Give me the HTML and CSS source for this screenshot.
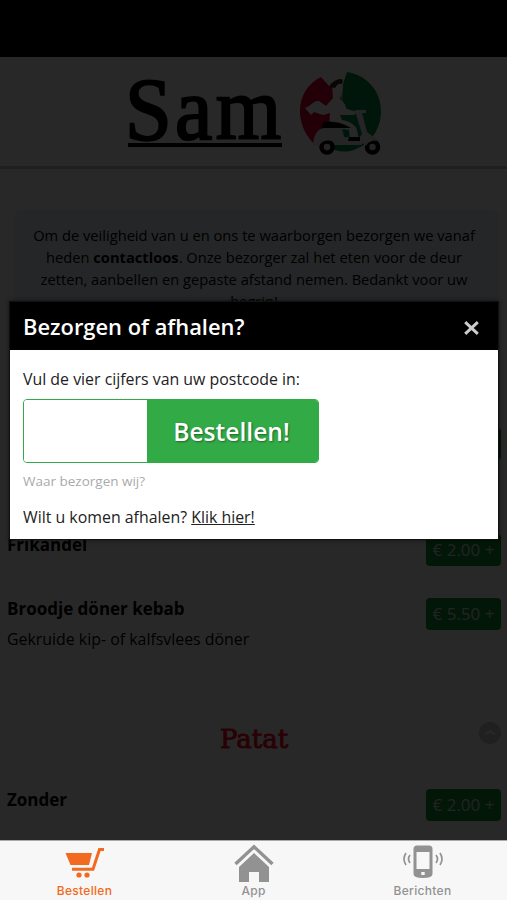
FILE: index.html
```html
<!DOCTYPE html>
<html lang="nl">
<head>
<meta charset="utf-8">
<title>Sam</title>
<link rel="stylesheet" href="styles.css">
</head>
<body>
<div class="app">
  <div class="screen">
    <div class="statusbar"></div>
    <header class="header">
      <span class="brand"><span class="brand-text">Sam</span></span>
      <svg class="logo" width="84" height="86" viewBox="0 0 84 86">
        <path fill="#e0002d" d="M22 5 C5 13 -2 32 2 48 C4 59 10 67 17 74 L44 62 L42 14 L31 15 Z"/>
        <path fill="#008f48" d="M48 0 C68 3 82 19 82 39 C82 57 72 71 57 77 C49 81 37 80 31 76 L42 48 L44 12 Z"/>
        <path fill="#fff" d="M33 12 L43 9 L43 20 L41 27 C47 31 46 35 48 37 L58 40 L55 43 L41 43 L43 48 C50 49 57 53 58 58 L60 68 L51 68 L50 58 L30 55 L31 41 L24 43 L15 40 L12 43 L6 36 C12 34 15 28 20 29 L27 34 L34 26 Z"/>
        <path fill="#3b2416" d="M30 15 C32 10 41 5 44 8 L43 12 C40 11 38 12 36 16 Z"/>
        <path fill="#e8e8e8" d="M56 38 H67 V41 H63 L68 60 L80 69 L79 74 L67 69 L62 73 H34 L14 74 C14 64 18 57 25 56 H43 L45 65 L60 66 L63 62 L57 42 Z"/>
        <path fill="#000" d="M24 50 Q38 48 52 56 H23 Z M50 65 H61 V69 H49 Z"/>
        <circle cx="28" cy="75" r="5.500" fill="#ddd" stroke="#000" stroke-width="4.500"/>
        <circle cx="73.500" cy="75" r="5.500" fill="#ddd" stroke="#000" stroke-width="4.500"/>
        <path fill="#e8e8e8" d="M17 65 H38 V73 C33 67 24 67 20 74 H15 Z M66 62 L80 70 C74 67 69 70 67 74 L63 70 Z"/>
      </svg>
    </header>
    <main class="menu">
      <p class="notice">Om de veiligheid van u en ons te waarborgen bezorgen we vanaf heden <b>contactloos</b>. Onze bezorger zal het eten voor de deur zetten, aanbellen en gepaste afstand nemen. Bedankt voor uw begrip!</p>
      <div class="item first"><h3></h3><span class="price">€ 2.00 +</span></div>
      <div class="item second"><h3>Frikandel</h3><span class="price">€ 2.00 +</span></div>
      <div class="item third"><div><h3>Broodje döner kebab</h3><p class="desc">Gekruide kip- of kalfsvlees döner</p></div><span class="price">€ 5.50 +</span></div>
      <div class="category">
        <h2>Patat</h2>
        <svg class="up" width="22" height="22" viewBox="0 0 22 22"><circle cx="11" cy="11" r="11" fill="#c8c8c8"/><path d="M6.5 12.5 L11 9 L15.5 12.5" fill="none" stroke="#fff" stroke-width="2"/></svg>
      </div>
      <div class="item"><h3>Zonder</h3><span class="price">€ 2.00 +</span></div>
    </main>
    <div class="overlay"></div>
    <section class="dialog">
      <div class="dialog-head">
        <h1>Bezorgen of afhalen?</h1>
        <svg width="15" height="14" viewBox="0 0 15 14"><path d="M1.2 1.2 L13.8 12.8 M13.8 1.2 L1.2 12.8" stroke="#ccc" stroke-width="3"/></svg>
      </div>
      <div class="dialog-body">
        <p class="prompt">Vul de vier cijfers van uw postcode in:</p>
        <form class="order"><input class="postcode" type="text"><button class="submit" type="button">Bestellen!</button></form>
        <p class="where">Waar bezorgen wij?</p>
        <p class="pickup">Wilt u komen afhalen? <a>Klik hier!</a></p>
      </div>
    </section>
  </div>
  <nav class="tabs">
    <div class="tab active">
      <svg width="40" height="35" viewBox="0 0 40 35"><g fill="#f26a21"><path d="M.5 8 H27 L24 20 H5.500 Z"/><circle cx="14" cy="30" r="2.600"/><circle cx="22" cy="30" r="2.600"/></g><path d="M7 24.300 H28 L34.500 4.500 H39" fill="none" stroke="#f26a21" stroke-width="3"/></svg>
      <span>Bestellen</span>
    </div>
    <div class="tab">
      <svg width="40" height="39" viewBox="0 0 40 39"><path d="M1.500 20 L20 2.800 L38.500 20" fill="none" stroke="#929292" stroke-width="3.400"/><path fill="#929292" d="M20 9 L35 23 V38 H25 V28 H15 V38 H5 V23 Z"/></svg>
      <span>App</span>
    </div>
    <div class="tab">
      <svg width="40" height="36" viewBox="0 0 40 36"><path fill="#929292" fill-rule="evenodd" d="M14 1.500 H26 Q29.500 1.500 29.500 5 V30 Q29.500 34 20 34 Q10.500 34 10.500 30 V5 Q10.500 1.500 14 1.500 Z M13.500 8 V25 H26.500 V8 Z M18.300 28 V31 H21.700 V28 Z"/><g fill="none" stroke="#929292" stroke-width="1.700"><path d="M7 11 Q4 15 7 19 M3 9 Q-1 15 3 21 M33 11 Q36 15 33 19 M37 9 Q41 15 37 21"/></g></svg>
      <span>Berichten</span>
    </div>
  </nav>
</div>
</body>
</html>
```
FILE: styles.css
```css
* { box-sizing: border-box; margin: 0; padding: 0; }
body { font-family: "Open Sans", sans-serif; background: #fff; overflow: hidden; }
.app { width: 507px; height: 900px; display: flex; flex-direction: column; }
.screen { position: relative; height: 840px; overflow: hidden; background: #fff; }
.statusbar { height: 57px; background: #000; }
.header { height: 112px; border-bottom: 3px solid #c4c4c4; display: flex; align-items: flex-start; justify-content: center; gap: 17px; padding-top: 14px; }
.brand { font: 88px/77px "Liberation Serif", serif; color: #000; border-bottom: 4px solid #000; width: 154px; height: 76px; -webkit-text-stroke: 2.200px #000; margin-left: 3px; }
.brand-text { display: inline-block; letter-spacing: 3.500px; transform: translateX(-3px) scaleX(.955); transform-origin: left; }
.logo { display: block; margin-top: 1px; }
.menu { padding: 40px 6px 0 7px; color: #000; }
.notice { margin: 0 2px 0 7px; height: 150px; padding: 14.500px 19px 0 14px; background: #e9f2f7; border-radius: 8px; text-align: center; font-size: 14.680px; line-height: 22px; }
.item { display: flex; justify-content: space-between; align-items: flex-start; }
.item h3 { font-size: 17px; line-height: 21px; }
.first { margin-top: 69px; height: 106px; }
.second { height: 64px; }
.third { height: 112px; }
.desc { font-size: 15.900px; line-height: 22px; margin-top: 9px; }
.price { width: 75px; height: 32px; background: #0f9130; color: #ddd; border-radius: 4px; text-align: center; font-size: 17px; line-height: 32px; white-space: nowrap; }
.category { display: grid; grid-template-columns: 1fr 1fr 1fr; height: 79px; }
.category h2 { grid-column: 2; text-align: center; color: #ff0a1e; font: 26px/58px "DejaVu Serif", serif; -webkit-text-stroke: .9px #ff0a1e; }
.category .up { justify-self: end; margin-top: 12px; }
.overlay { position: absolute; inset: 0; background: rgba(0, 0, 0, .843); }
.dialog { position: absolute; left: 9px; top: 301px; width: 490px; height: 239px; background: #fff; border: 1px solid #111; box-shadow: 0 0 4px rgba(0, 0, 0, .6); }
.dialog-head { height: 48px; background: #000; color: #fff; display: flex; align-items: center; justify-content: space-between; padding: 1px 19px 0 13px; }
.dialog-head h1 { font-size: 21.900px; font-weight: 600; line-height: 30px; }
.dialog-head svg { margin-top: 3px; }
.dialog-body { padding: 18px 13px; color: #222; font-size: 15.900px; line-height: 22px; }
.order { display: flex; width: 296px; height: 64px; margin-top: 9px; border: 1px solid #32ab46; border-radius: 4px; overflow: hidden; }
.postcode { width: 123px; border: 0; background: #fff; }
.submit { flex: 1; border: 0; padding-right: 2px; background: #32ab46; color: #fff; font: 600 24.600px "Open Sans", sans-serif; text-shadow: 1px 1px 2px rgba(0, 0, 0, .4); }
.where { font-size: 13.500px; line-height: 20px; color: #aaa; margin-top: 8px; }
.pickup { margin-top: 15px; }
.pickup a { text-decoration: underline; }
.tabs { height: 60px; background: #f7f7f7; border-top: 1px solid #aaa; display: grid; grid-template-columns: 169px 1fr 169px; }
.tab { display: flex; flex-direction: column; align-items: center; justify-content: flex-end; color: #929292; font: 500 12px/14px Inter, sans-serif; letter-spacing: .3px; padding-bottom: 2px; height: 59px; }
.tab svg { margin-bottom: 4px; }
.tab:nth-child(2) svg { margin-bottom: 1px; }
.active { color: #f26a21; }
```
